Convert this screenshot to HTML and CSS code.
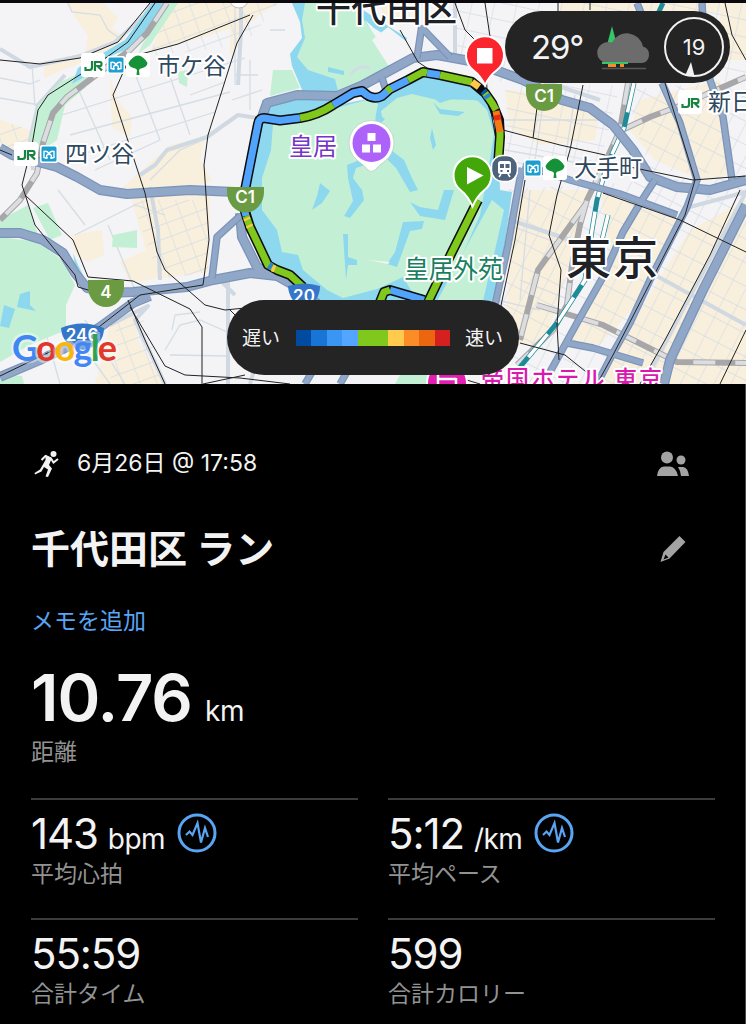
FILE: index.html
```html
<!DOCTYPE html>
<html lang="ja">
<head>
    <meta charset="UTF-8">
    <meta name="viewport" content="width=device-width, initial-scale=1.0">
    <title>千代田区 ラン</title>
    <link rel="stylesheet" href="styles.css">
</head>
<body>
    <div class="map">
        <svg class="map-canvas" viewBox="0 0 746 384" width="746" height="384">
            <defs>
                <pattern id="gridEast" width="15" height="21" patternUnits="userSpaceOnUse" patternTransform="rotate(27)">
                    <path class="street" d="M0 0V21M0 0H15"/>
                </pattern>
                <pattern id="gridNorth" width="22" height="17" patternUnits="userSpaceOnUse" patternTransform="rotate(12)">
                    <path class="street" d="M0 0V17M0 0H22"/>
                </pattern>
                <pattern id="gridWest" width="16" height="14" patternUnits="userSpaceOnUse" patternTransform="rotate(-20)">
                    <path class="street" d="M0 0V14M0 0H16"/>
                </pattern>
            </defs>
            <rect width="746" height="384" fill="#f4f3f5"/>

            <!-- 街区 -->
            <g fill="#f8efdc">
                <path d="M66 3H104L118 18 112 28 128 40 92 58 44 78V66L84 56 88 36Z"/>
                <path d="M170 3H278L250 22 210 35 150 52 160 30Z"/>
                <path d="M0 120L30 130 34 150 20 155 0 142Z"/>
                <path d="M110 78L118 100 132 118 130 136 112 128Z"/>
                <path d="M122 188L140 172 170 145 205 138 200 160 212 180 190 190Z"/>
                <path d="M70 235L102 230 104 255 88 262 76 255Z"/>
                <path d="M130 195L210 195 208 272 130 282 120 262 146 250Z"/>
                <path d="M110 320L130 306 140 345 165 384H95L105 350Z"/>
                <path d="M505 90L552 92 560 105 600 112 595 140 540 145 510 128Z"/>
                <path d="M520 190L590 190 545 345 505 345 510 250Z"/>
                <path d="M600 190L680 215 640 300 600 345 570 340 610 250Z"/>
                <path d="M690 230L746 200 746 384H595L640 310Z"/>
                <path d="M640 100L720 80 730 175 700 180 655 160 630 130Z"/>
                <path d="M560 3H746V60H720V12H560Z"/>
                <path d="M230 3H250L240 45 230 55ZM380 3H410V25H385Z"/>
            </g>
            <path fill="url(#gridWest)" d="M165 3H278L245 45 150 56ZM0 120L30 130 34 150 0 150ZM132 200H208V272L160 280ZM118 312L140 310 165 384H110Z"/>
            <path fill="url(#gridEast)" d="M500 190L746 175V384H500ZM625 90L746 80V175L650 170Z"/>
            <path fill="url(#gridNorth)" d="M450 3H746V82H500L460 60ZM505 85H620L600 165 508 165Z"/>

            <!-- 細い道路 -->
            <g class="street">
                <path d="M0 78L30 84 40 80M32 64L35 106M0 98L45 106M68 3L72 12 100 15 108 30 122 40"/>
                <path d="M62 115L245 58M70 135L230 92M80 155L215 112M95 170L160 140M75 82L110 160M130 60L160 140M165 62L190 135M190 95L225 82M235 3V85"/>
                <path d="M75 235L135 205 165 215M108 225L135 290M58 190L85 225M150 180L180 150 210 137"/>
                <path d="M165 350L180 325 200 320 245 340M170 355L230 356M172 330L175 315 200 312M45 330L60 384M85 320L125 384M75 335L110 384"/>
                <path d="M235 75H258M232 100L262 90M270 30H285M250 110V60"/>
                <path d="M500 120H600M505 150L590 165M545 90L535 160M575 95L562 180"/>
                <path d="M500 215L560 235 610 250M497 300L540 310M520 280L570 300M530 190L520 300M500 222L555 242"/>
            </g>
            <g class="road-light">
                <path d="M0 49L30 67 80 56 115 42 145 15 152 3M33 170L30 140 38 105 65 75"/>
                <path d="M150 187L158 230 160 280M238 85L241 30V3M140 175L155 165 167 150 207 137 238 115 258 118"/>
                <path d="M455 3V55M530 90L540 80 600 100M746 192L640 390M655 275L746 325M690 207L746 192"/>
                <path d="M110 325L148 306 135 320 165 384M228 280V384M215 275L235 295"/>
                <path d="M240 310L260 350 250 384M495 215L570 240"/>
            </g>

            <!-- 公園と水辺 -->
            <g fill="#c3f0d5">
                <path d="M30 140L38 105 60 82 92 68 85 88 65 105 57 140 45 148Z"/>
                <path d="M142 45L168 3H178L150 45 138 54Z"/>
                <path d="M0 237L38 242 62 260 75 285 66 305 66 330 30 345 0 362Z"/>
                <path d="M113 235L137 230V248L112 247ZM33 208L48 203 62 235 50 240ZM178 72L188 70 187 87 179 83Z"/>
                <path d="M0 220L28 205 38 235 0 230ZM0 374L22 376 24 384H0Z"/>
                <path d="M273 70H292L300 88 270 96Z"/>
                <path d="M400 375H430L440 384H395Z"/>
            </g>
            <g fill="#8dd8ee">
                <path d="M152 3H168L135 46 108 57 88 75 72 84 78 68 108 50 125 40Z"/>
                <path d="M20 294L30 291V305L36 311 17 307ZM4 305L15 309 9 328 0 326ZM73 253L78 265 88 285 78 282Z"/>
                <path d="M292 3H352L407 38 404 47 374 28 365 20 378 42 355 80 337 98 303 92 292 66 290 54 302 38 300 22Z"/>
                <path d="M262 100L337 95V112L300 122 262 122Z"/>
                <path d="M262 122L300 119 333 106 372 98 388 94 425 76 470 86 490 100 498 130 500 190 512 192 504 250 490 312H310L290 278 268 266 252 228 247 190Z"/>
            </g>
            <g fill="#c3f0d5">
                <path d="M305 3H352L364 20 378 40 393 58 387 68 357 83 338 91 335 79 308 70 297 57 305 38 302 20Z"/>
                <path d="M273 124L303 121 340 107 370 99 378 104 376 114 383 121 381 111 397 98 412 94 433 99 477 100 487 110 494 134 489 165 480 215 460 260 430 300 412 292 403 277 377 289 343 298 327 290 303 270 298 255 282 252 277 230 262 210 262 178 271 150Z"/>
                <path d="M492 200L504 210 495 250 482 305H435L470 240Z"/>
            </g>
            <g fill="#8dd8ee">
                <path d="M376 113L385 119 380 124 391 150 404 160 412 178 418 190 410 192 396 168 386 158 356 168 353 178 362 190 364 200 350 218 344 216 353 201 348 178 347 165 372 155Z"/>
                <path d="M320 183L330 191 322 203 312 210 317 196ZM343 234H348V257L357 260V265L348 265 346 280Z"/>
                <path d="M403 222L424 221 422 229 410 231 397 267 387 264 395 252ZM410 202L420 207 438 210 444 190H454L445 220 420 216Z"/>
                <path d="M433 102L440 109 465 112 458 116 440 114ZM432 128L436 145 433 150 430 138ZM328 67L344 71V75L328 72Z"/>
                <path d="M415 80L445 84 440 94 465 95 460 87 475 88 480 101 455 98 440 103 425 92 402 94Z"/>
            </g>
            <path fill="#f4f3f5" d="M372 40L388 27 407 42 415 58 390 68ZM368 260L390 262 388 264Z"/>
            <path d="M350 75C355 68 365 64 370 69" fill="none" stroke="#d3dce4" stroke-width="3"/>

            <!-- 鉄道 -->
            <g class="rail">
                <path d="M167 3L147 33 130 50 100 72 67 97 53 113 43 143 37 173 20 200 0 220"/>
                <path d="M628 83L620 130 603 167 587 200 580 225 572 265 567 305 553 330 517 365"/>
                <path d="M622 130L650 117 677 107 746 77M585 205L538 270 520 340M537 305L603 325 677 362 746 363"/>
            </g>
            <g class="rail-dash">
                <path d="M167 3L147 33 130 50 100 72 67 97 53 113 43 143 37 173 20 200 0 220"/>
                <path d="M628 83L620 130 603 167 587 200 580 225 572 265 567 305 553 330 517 365"/>
                <path d="M622 130L650 117 677 107 746 77M585 205L538 270 520 340M537 305L603 325 677 362 746 363"/>
            </g>
            <path class="shinkansen" d="M663 3L655 20M634 83L624 128 607 165 597 200 592 230 585 280 557 323 520 367M608 215L602 240"/>
            <path class="shinkansen-dash" d="M634 83L624 128 607 165 597 200 592 230 585 280 557 323 520 367M608 215L602 240"/>

            <!-- 幹線道路 -->
            <g class="road-edge">
                <path id="r1" d="M0 148L12 155 57 167 77 177 100 190 127 194 190 190 235 192"/>
                <path id="r2" d="M0 233L20 233 43 240 63 253 75 273 87 288 107 293 133 292 187 287 213 280 250 273 277 276 293 285 320 306"/>
                <path id="r3" d="M0 377L40 360 67 347 100 327 133 303 150 296"/>
                <path id="r4" d="M240 213L242 237 257 267 278 276"/>
                <path id="r5" d="M262 117L267 103 297 95 337 96 363 85 413 58 437 55 470 61 523 80 562 100 590 108 613 125 633 150 650 177 677 187 710 190 746 180"/>
                <path id="r11" d="M746 205L703 290 670 360 664 384"/>
            </g>
            <g class="road">
                <use href="#r1"/><use href="#r2"/><use href="#r3"/><use href="#r4"/><use href="#r5"/><use href="#r11"/>
            </g>
            <g class="road-edge thin">
                <path id="r6" d="M240 216L217 237 212 278M422 25L417 58M422 28L450 57M382 78L386 90"/>
                <path id="r7" d="M662 83L680 123 697 180 687 207 650 280 630 323 613 353 597 384"/>
                <path id="r8" d="M702 3L704 40 710 80 723 117 732 180M637 3L643 18"/>
                <path id="r9" d="M655 180L642 200 623 232 603 277 577 323 550 372M567 343L593 348 643 363"/>
                <path id="r10" d="M523 165L570 180 620 194 677 215M522 168L516 200 508 245 494 310M305 384L312 372M340 384L348 370"/>
            </g>
            <g class="road thin">
                <use href="#r6"/><use href="#r7"/><use href="#r8"/><use href="#r9"/><use href="#r10"/>
            </g>

            <!-- 地下鉄 -->
            <g class="subway">
                <path d="M0 60L40 64 80 58 118 42 150 3M155 3L128 42 100 62 48 95 38 110 32 145 22 185 35 225 75 275 78 287 105 295"/>
                <path d="M0 150L12 155M250 15L178 44 130 57 113 95 145 193 157 252 165 270 205 305 225 310 245 308"/>
                <path d="M253 15L237 43 208 135 204 165 209 240 203 285 140 295 95 330 0 376M25 195L73 240 88 277 133 281 190 309 202 327V384"/>
                <path d="M128 300L145 340 165 384M130 307L165 366 185 375 240 378 290 384M203 384L245 375"/>
                <path d="M400 30L418 62 430 70M455 3L465 30 485 50 487 90 497 145 498 165M485 3L492 50"/>
                <path d="M558 3V15M590 3V10M583 85L570 150 557 195 549 235 561 270 557 325 559 360M540 85L533 138M503 130L560 145 605 155M525 180L515 240 500 310"/>
                <path d="M620 165L693 180 746 176M665 83L695 180 685 215 613 355 597 384M603 193L680 220 746 252M740 190L710 255 665 340 640 384M520 343L565 355 590 375M746 330L720 384"/>
                <path d="M725 3L732 35 746 60M450 375L480 384M230 310L240 320"/>
            </g>
            <path fill="#fff" stroke="#bbb" d="M230 0A9 8 0 0 0 248 0Z"/>

            <!-- ランのルート -->
            <g class="route-edge">
                <path d="M245 190L258 124Q259 118 264 118L280 120.5 300 118 Q318 115 333 105L353 93 362 91 367 95Q374 100 382 96L390 89 408 80 423 72 440 75 472 82 485 93 492 103 499 120 500 137 498 165"/>
                <path d="M244 208L250 227 268 265 277 270 290 275 303 287M380 302L384 292 390 290 424 300M478 200L452 252 428 302"/>
            </g>
            <g class="route">
                <path stroke="#52a3fb" d="M245 190L258 124Q259 118 264 118L280 120.5 300 118M333 105L353 93 362 91 367 95Q374 100 382 96L390 89 408 80M427 73L440 75M244 208L246 216M390 290L424 300"/>
                <path stroke="#80c91c" d="M300 118Q318 115 333 105M408 80L423 72 427 73M440 75L472 82M246 216L250 227 268 265 277 270 290 275 303 287M380 302L384 292 390 290M478 200L452 252 428 302M387 91L391 88M485 93L492 103 496 110M500 130V137L498 165"/>
                <path stroke="#ffc84b" d="M472 82L479 87M246.500 218L247.500 220M249 225L250 227M272 268L275 269"/>
                <path stroke="#0757a8" d="M483 91L485 93"/>
                <path stroke="#2b83d6" d="M269 265L272 267M486 95L488 98"/>
                <path stroke="#f47914" d="M496 111L500 132"/>
                <path stroke="#e92a18" d="M497 115L498 120"/>
            </g>

            <!-- 道路標識 -->
            <g fill="#6a9a41">
                <path d="M227 187H264V192A18 20 0 0 1 227 192Z"/>
                <path d="M88 280H124V287A18 20 0 0 1 88 287Z"/>
                <path d="M526 84H562V92A18 19 0 0 1 526 92Z"/>
            </g>
            <g fill="#3576c8">
                <path d="M61 328Q82 319 104 328Q104 346 83 350Q62 346 61 328Z"/>
                <path d="M288 286Q304 281 320 286Q320 302 304 308Q289 302 288 286Z"/>
            </g>
            <g class="shield-text">
                <text x="245" y="203">C1</text>
                <text x="544" y="102">C1</text>
                <text x="106" y="298">4</text>
                <text x="82" y="341">246</text>
                <text x="304" y="302">20</text>
            </g>

            <!-- 駅アイコン -->
            <g>
                <g fill="#fff">
                    <rect x="81" y="53" width="24" height="24" rx="3"/><rect x="107" y="56" width="18" height="18" rx="2"/><rect x="126" y="53" width="24" height="24" rx="3"/>
                    <rect x="14" y="142" width="24" height="24" rx="3"/><rect x="40" y="145" width="18" height="18" rx="2"/>
                    <rect x="678" y="90" width="24" height="24" rx="3"/><rect x="524" y="159" width="18" height="18" rx="2"/><rect x="543" y="156" width="24" height="24" rx="3"/>
                </g>
                <g id="jr" fill="none" stroke="#198342" stroke-width="2.200">
                    <path d="M92 61V67.500Q92 70 89.500 70H85.500V67M95 71V62H100Q101.500 62 101.500 64T100 66H97.500L102 70.500"/>
                </g>
                <use href="#jr" x="-67" y="89"/>
                <use href="#jr" x="597" y="37"/>
                <g id="metro">
                    <rect x="108.500" y="57.500" width="15" height="15" rx="1.500" fill="#1b9ed0"/>
                    <path d="M114.500 69.500L111 68.500V62.500Q114.500 61.500 116 65Q117.500 61.500 121 62.500V68.500L117.500 69.500M116 65Q112 66 114.500 69.500M116 65Q120 66 117.500 69.500" fill="none" stroke="#fff" stroke-width="1.400"/>
                </g>
                <use href="#metro" x="-67" y="89"/>
                <use href="#metro" x="417" y="103"/>
                <path id="leaf" fill="#159238" d="M138 55.500Q143 55.500 147.500 63Q147 67 142.500 68Q139.500 68.500 139 70L139.500 75H136.500L137 70Q136.500 68.500 133.500 68Q129 67 128.500 63Q133 55.500 138 55.500Z"/>
                <use href="#leaf" x="417" y="103"/>
            </g>
            <g>
                <rect x="491.500" y="155.500" width="26" height="26" rx="11" fill="#4d637b" stroke="#fff" stroke-width="1.500"/>
                <rect x="498" y="161" width="13" height="13" rx="2.500" fill="#fff"/>
                <path fill="#4d637b" d="M500 164H504V168H500ZM505.500 164H509.500V168H505.500ZM500.500 170H502.500V172H500.500ZM507 170H509V172H507Z"/>
                <path d="M501 174L499 177M508 174L510 177" stroke="#fff" stroke-width="1.500"/>
            </g>

            <!-- 地名 -->
            <g class="place station">
                <text x="157" y="74" font-size="23" textLength="69">市ケ谷</text>
                <text x="65" y="162" font-size="23" textLength="69">四ツ谷</text>
                <text x="574" y="176" font-size="23" textLength="68">大手町</text>
                <text x="708" y="110" font-size="23">新日</text>
            </g>
            <g class="place city">
                <text x="316" y="22" font-size="35" textLength="141">千代田区</text>
                <text x="566" y="275" font-size="45" textLength="92">東京</text>
            </g>
            <text class="place palace" x="289" y="155" font-size="24" textLength="48">皇居</text>
            <text class="place garden" x="404" y="278" font-size="25" textLength="99">皇居外苑</text>
            <circle cx="447" cy="383" r="20" fill="#e21fb0" stroke="#fff" stroke-width="2"/>
            <path d="M438 375V391M456 378V391M438 379H456" stroke="#fff" stroke-width="2.500" fill="none"/>
            <text class="place hotel" x="481" y="387" font-size="23" textLength="181">帝国ホテル 東京</text>

            <!-- ピン -->
            <g>
                <path fill="#fff" stroke="#bbb" stroke-width=".6" d="M371.500 120.500A22.500 22.500 0 0 1 385 161Q378 166 375 170Q371.500 173 368 170Q365 166 358 161A22.500 22.500 0 0 1 371.500 120.500Z"/>
                <circle cx="371.500" cy="143" r="19" fill="#ad62fa"/>
                <path fill="#fff" d="M367.500 133H375.500V141H367.500ZM362 144.500H370V152.500H362ZM373 144.500H381V152.500H373Z"/>
            </g>
            <path fill="#fb252d" stroke="#fff" stroke-width="2" d="M485 85.500Q481 76 473 70A19 19 0 1 1 497 70Q489 76 485 85.500Z"/>
            <rect x="477" y="48" width="15.500" height="15.500" fill="#fff"/>
            <path fill="#43a709" stroke="#fff" stroke-width="2" d="M472.500 206.500Q468 196 460.500 190A19 19 0 1 1 484.500 190Q477 196 472.500 206.500Z"/>
            <path fill="#fff" d="M467 167L483.500 175.500 467 184.500Z"/>

            <text class="google" x="12" y="361" textLength="105"><tspan fill="#4285f4">G</tspan><tspan fill="#e2382b">o</tspan><tspan fill="#f8b60a">o</tspan><tspan fill="#4285f4">g</tspan><tspan fill="#30a24f">l</tspan><tspan fill="#e2382b">e</tspan></text>
            <rect width="746" height="3" fill="#0b080e"/>
        </svg>

        <div class="weather">
            <span class="temperature">29°</span>
            <svg class="weather-icon" viewBox="0 0 56 46" width="56" height="46">
                <path fill="#35c667" d="M16 1L21 20H11Z"/>
                <path fill="#f58b2d" d="M12 38H20V42H12ZM24 39H28V42H24Z"/>
                <path fill="#6c6c6c" d="M10 38A10.500 10.500 0 0 1 9 17.500Q13 16.500 16 17.500A16.500 16.500 0 0 1 47 21.500A8.500 8.500 0 0 1 46 38Z"/>
                <path fill="#35c667" d="M6 37H32V39H6Z"/>
                <path stroke="#575757" stroke-width="1.500" d="M6 43.500H50"/>
            </svg>
            <div class="wind">
                <span>19</span>
                <svg class="wind-arrow" viewBox="0 0 10 15" width="10" height="15"><path fill="#f2f2f2" d="M6 0L9.500 14H0Z"/></svg>
            </div>
        </div>

        <div class="legend">
            <span>遅い</span>
            <div class="legend-scale">
                <i class="s1"></i><i class="s2"></i><i class="s3"></i><i class="s4"></i><i class="s5"></i>
                <i class="s5"></i><i class="s6"></i><i class="s7"></i><i class="s8"></i><i class="s9"></i>
            </div>
            <span>速い</span>
        </div>
    </div>

    <div class="details">
        <div class="row date-row">
            <svg class="run-icon" viewBox="0 0 28 28" width="28" height="28">
                <circle cx="20.500" cy="4" r="3" fill="#f2f2f2"/>
                <path d="M8.500 10L12.500 6 18 8.500 20.500 12.500 25 9" fill="none" stroke="#f2f2f2" stroke-width="2"/>
                <path d="M12.500 5L19 8 16 15 19 18.500 15 27 12.500 26.500 15 19.500 11 17 8.500 21.500 2 24.500 1.500 23 7 19.500 12.500 10Z" fill="#f2f2f2"/>
            </svg>
            <span class="date">6月26日 @ 17:58</span>
            <svg class="people-icon" viewBox="0 0 34 26" width="34" height="26">
                <g fill="#a3a3a3">
                    <circle cx="11" cy="6.500" r="6"/>
                    <circle cx="25" cy="9" r="4.500"/>
                    <path d="M1 25Q2 16 8 15.500H14Q20 16 22 25ZM22 16H27Q32 16.500 33 25H25Q24.500 19.500 22 16Z"/>
                </g>
            </svg>
        </div>
        <div class="row title-row">
            <h1>千代田区 ラン</h1>
            <svg class="edit-icon" viewBox="0 0 28 28" width="28" height="28">
                <path fill="#a3a3a3" fill-rule="evenodd" d="M20.500 1L26.500 7 10.500 23.500 1.500 27 4.500 17ZM6.500 19.500L4.500 24.500 9.500 22.500Z"/>
            </svg>
        </div>
        <a href="#" class="memo-link">メモを追加</a>

        <div class="distance"><strong>10.76</strong><span class="unit">km</span></div>
        <div class="label">距離</div>

        <div class="stats">
            <div class="stat">
                <div class="value"><span class="number">143</span><span class="unit">bpm</span>
                    <svg class="chart-icon" viewBox="0 0 40 40" width="40" height="40">
                        <circle cx="20" cy="20" r="18" fill="none" stroke="#59a5f4" stroke-width="3"/>
                        <path d="M9 22L12.500 18.500 15.500 22 20.500 10 24 29.500 28 15 31 24" fill="none" stroke="#59a5f4" stroke-width="2.200"/>
                    </svg>
                </div>
                <div class="label">平均心拍</div>
            </div>
            <div class="stat">
                <div class="value"><span class="number">5:12</span><span class="unit">/km</span>
                    <svg class="chart-icon" viewBox="0 0 40 40" width="40" height="40">
                        <circle cx="20" cy="20" r="18" fill="none" stroke="#59a5f4" stroke-width="3"/>
                        <path d="M9 22L12.500 18.500 15.500 22 20.500 10 24 29.500 28 15 31 24" fill="none" stroke="#59a5f4" stroke-width="2.200"/>
                    </svg>
                </div>
                <div class="label">平均ペース</div>
            </div>
            <div class="stat">
                <div class="value"><span class="number">55:59</span></div>
                <div class="label">合計タイム</div>
            </div>
            <div class="stat">
                <div class="value"><span class="number">599</span></div>
                <div class="label">合計カロリー</div>
            </div>
        </div>
    </div>
</body>
</html>
```
FILE: styles.css
```css
* {
    margin: 0;
    padding: 0;
    box-sizing: border-box;
}

body {
    width: 746px;
    height: 1024px;
    overflow: hidden;
    background-color: #000;
    color: #f3f3f3;
    font-family: Inter, "Noto Sans CJK JP", sans-serif;
}

/* 地図 */
.map {
    position: relative;
    height: 384px;
    overflow: hidden;
}

.map-canvas {
    display: block;
}

.street {
    fill: none;
    stroke: #d5dde5;
    stroke-width: 1.3;
}

.road-light {
    fill: none;
    stroke: #d0d9e1;
    stroke-width: 4;
    stroke-linejoin: round;
}

.road-edge {
    fill: none;
    stroke: #7b94b9;
    stroke-width: 10;
    stroke-linejoin: round;
}

.road {
    fill: none;
    stroke: #91a7c7;
    stroke-width: 7.5;
}

.road-edge.thin {
    stroke-width: 7.5;
}

.road.thin {
    stroke-width: 5;
}

.subway {
    fill: none;
    stroke: #222;
    stroke-width: 1;
}

.rail {
    fill: none;
    stroke: #a7a7a9;
    stroke-width: 6;
}

.rail-dash {
    fill: none;
    stroke: #dcdde0;
    stroke-width: 4;
    stroke-dasharray: 22 20;
}

.shinkansen {
    fill: none;
    stroke: #1d8b98;
    stroke-width: 5;
}

.shinkansen-dash {
    fill: none;
    stroke: #fff;
    stroke-width: 3.5;
    stroke-dasharray: 30 15;
}

.route-edge {
    fill: none;
    stroke: #0b0d10;
    stroke-width: 10;
    stroke-linejoin: round;
}

.route {
    fill: none;
    stroke-width: 7;
    stroke-linejoin: round;
}

.shield-text {
    fill: #fff;
    font-size: 17px;
    font-weight: 600;
    text-anchor: middle;
}

.place {
    paint-order: stroke;
    stroke: #fff;
    stroke-width: 4px;
    stroke-linejoin: round;
    font-family: "Noto Sans CJK JP", sans-serif;
}

.station {
    fill: #2e4860;
}

.city {
    fill: #202126;
    font-weight: 500;
}

.palace {
    fill: #7635c8;
}

.garden {
    fill: #197f5f;
}

.hotel {
    fill: #d91aad;
    font-weight: 500;
}

.google {
    paint-order: stroke;
    stroke: rgba(255, 255, 255, 0.4);
    stroke-width: 5px;
    stroke-linejoin: round;
    font-family: Lato, sans-serif;
    font-size: 36px;
    font-weight: 700;
}

.weather {
    position: absolute;
    left: 505px;
    top: 11px;
    width: 225px;
    height: 72px;
    padding: 0 6px 0 26px;
    border-radius: 36px;
    background-color: #242424;
    display: flex;
    align-items: center;
}

.temperature {
    width: 65px;
    font-size: 33px;
    letter-spacing: -1.2px;
}

.weather-icon {
    flex: none;
    margin: 2px 8px 0 0;
}

.wind {
    position: relative;
    flex: none;
    width: 60px;
    height: 60px;
    margin-left: auto;
    border: 2px solid #f2f2f2;
    border-radius: 50%;
    text-align: center;
    font-size: 22px;
    line-height: 56px;
}

.wind-arrow {
    position: absolute;
    left: 19px;
    bottom: -2px;
}

.legend {
    position: absolute;
    left: 227px;
    top: 300px;
    width: 292px;
    height: 75px;
    padding: 0 15px 2px;
    border-radius: 38px;
    background-color: #242424;
    display: flex;
    align-items: center;
    font-size: 19px;
}

.legend-scale {
    display: flex;
    width: 154px;
    height: 16px;
    margin: 2px 15px 0 16px;
}

.legend-scale i {
    flex: 1;
}

.s1 { background-color: #004a9f; }
.s2 { background-color: #1874d5; }
.s3 { background-color: #3b96f3; }
.s4 { background-color: #54a5ff; }
.s5 { background-color: #80c91c; }
.s6 { background-color: #fecb4e; }
.s7 { background-color: #fb8c27; }
.s8 { background-color: #ea6610; }
.s9 { background-color: #d52020; }

/* 詳細 */
.details {
    height: 640px;
    padding: 60px 30px 0 31px;
    border-right: 1px solid #484848;
}

.row {
    display: flex;
    align-items: center;
}

.date-row {
    height: 40px;
}

.run-icon {
    margin-left: 2px;
}

.date {
    margin-left: 16px;
    font-size: 23px;
    line-height: 36px;
    padding-bottom: 2px;
}

.people-icon {
    margin-left: auto;
    margin-right: 25px;
}

.title-row {
    height: 50px;
    margin-top: 40px;
    justify-content: space-between;
}

.title-row h1 {
    font-size: 39px;
    font-weight: 700;
    line-height: 50px;
}

.edit-icon {
    margin-right: 28px;
}

.memo-link {
    display: block;
    margin-top: 32px;
    color: #59a5f4;
    font-size: 23px;
    line-height: 30px;
    text-decoration: none;
}

.distance {
    display: flex;
    align-items: baseline;
    height: 72px;
    margin-top: 26px;
    line-height: 72px;
}

.distance strong {
    font-size: 65px;
    font-weight: 600;
    letter-spacing: -1px;
}

.unit {
    margin-left: 13px;
    font-size: 28px;
    letter-spacing: -0.3px;
}

.label {
    color: #929292;
    font-size: 23px;
    line-height: 30px;
}

.distance + .label {
    margin-top: 3px;
}

.stats {
    display: grid;
    grid-template-columns: 1fr 1fr;
    column-gap: 30px;
    margin-top: 31px;
}

.stat {
    height: 120px;
    padding-top: 9px;
    border-top: 2px solid #3c3c3c;
}

.value {
    display: flex;
    align-items: baseline;
    height: 50px;
    line-height: 50px;
}

.number {
    font-size: 42px;
    letter-spacing: -1.1px;
}

.value .unit {
    margin-left: 10px;
    letter-spacing: -0.6px;
}

.chart-icon {
    align-self: center;
    margin: -2px 0 0 12px;
}
```
